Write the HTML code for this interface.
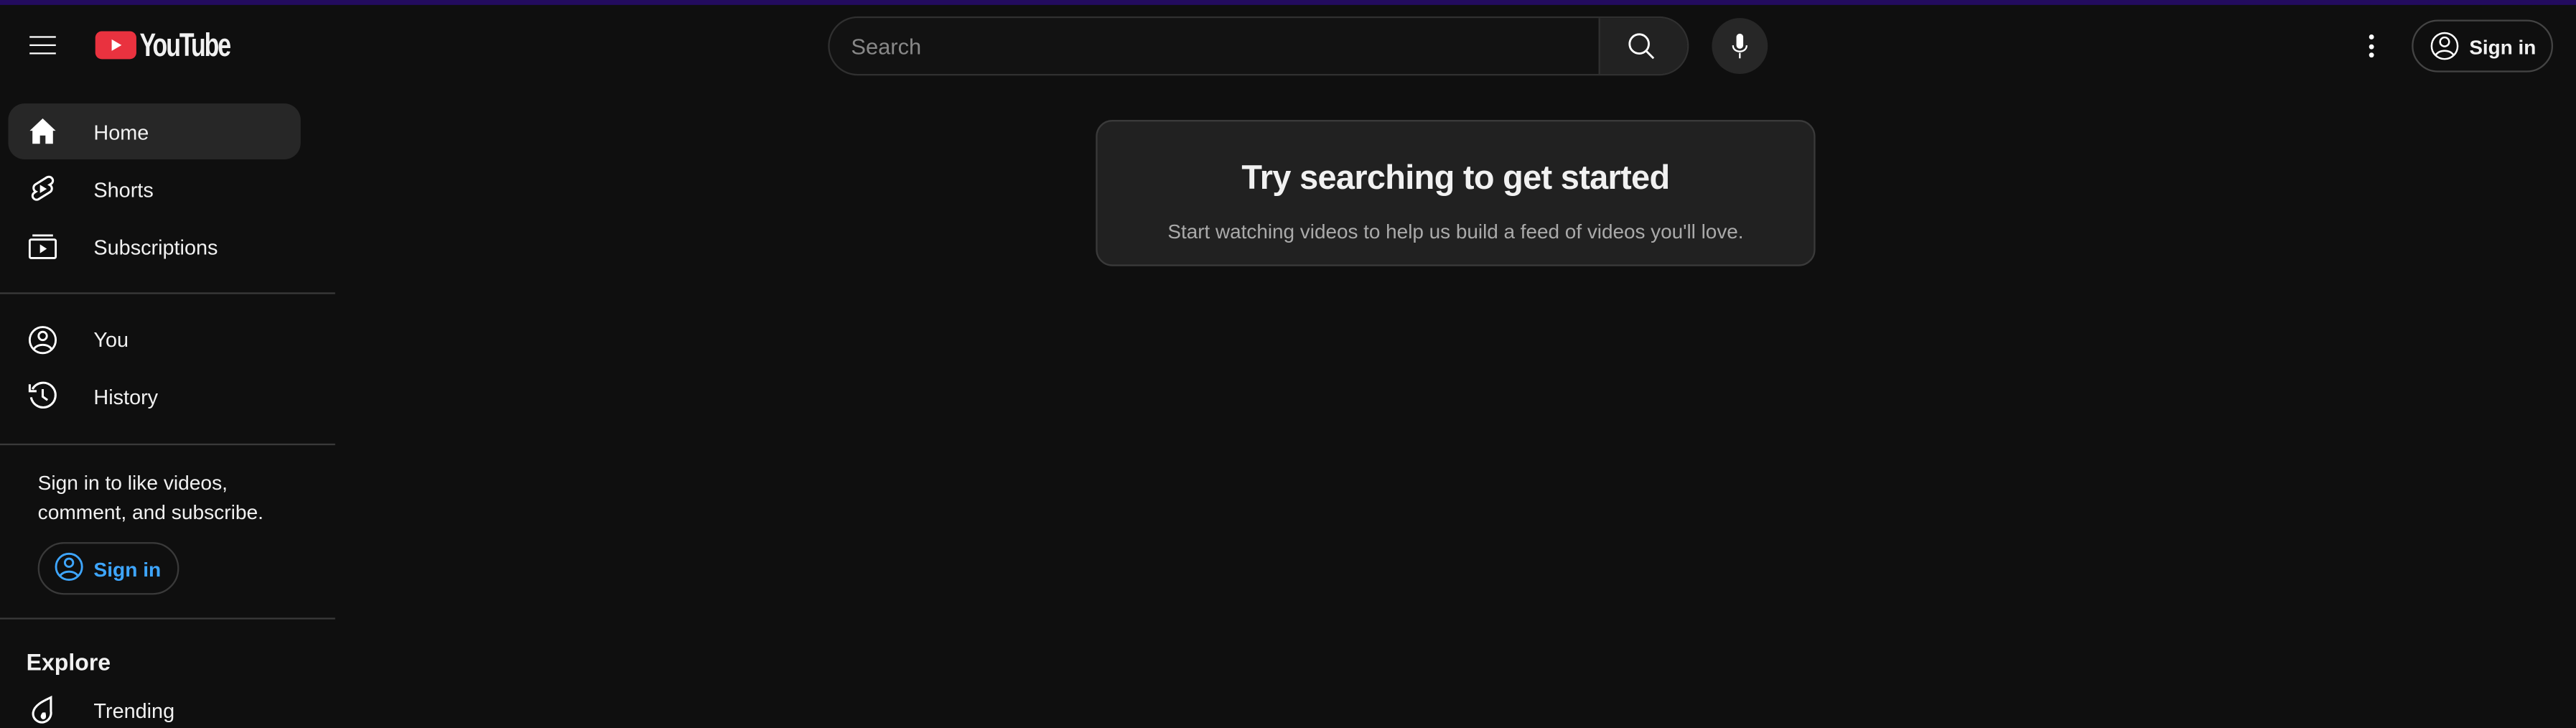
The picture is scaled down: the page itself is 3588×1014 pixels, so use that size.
<!DOCTYPE html>
<html><head><meta charset="utf-8"><style>
html,body{margin:0;padding:0;background:#0f0f0f;width:3588px;height:1014px;overflow:hidden}
#w{position:absolute;left:0;top:0;width:1568px;height:443px;transform:scale(2.2883);transform-origin:0 0;font-family:"Liberation Sans",sans-serif;color:#f1f1f1}
.a{position:absolute}
.bar{left:0;top:0;width:1568px;height:2.5px;background:#230b5e}
.item{position:absolute;left:57px;font-size:12.6px;line-height:16px}
.ic{position:absolute;left:16px}
.hr{position:absolute;left:0;width:204px;height:1px;background:#3a3a3a}
</style></head><body><div id="w">
<div class="a bar"></div>
<div class="a" style="left:18px;top:21.5px;width:16px;height:1.3px;background:#fff"></div>
<div class="a" style="left:18px;top:26.8px;width:16px;height:1.3px;background:#fff"></div>
<div class="a" style="left:18px;top:32px;width:16px;height:1.3px;background:#fff"></div>
<div class="a" style="left:58px;top:19px;width:25px;height:17px;background:#e9323f;border-radius:4px"></div>
<svg class="a" style="left:58px;top:19px" width="25" height="17"><path d="M10 5 L10 12 L16 8.5Z" fill="#fff"/></svg>
<div class="a" style="left:85px;top:17px;font-size:20px;font-weight:bold;letter-spacing:-1.2px;transform:scaleX(.74);transform-origin:0 0;line-height:22px">YouTube</div>
<div class="a" style="left:5px;top:63px;width:178px;height:34px;background:#272727;border-radius:10px"></div>
<svg class="ic" style="top:70px" width="20" height="20" viewBox="0 0 24 24"><path d="M12 2.5 L2.5 11.5 H4.5 V21 H10 V15 H14 V21 H19.5 V11.5 H21.5Z" fill="#fff"/></svg>
<div class="item" style="top:73px">Home</div>
<svg class="ic" style="top:105px" width="20" height="20" viewBox="0 0 24 24"><path d="M15 3.5 c3-1.5 6 2 3.5 4.5 l-1.5 1 c2 1 2.5 4 0 5.5 L9 19.5 c-3 1.5-6-2-3.5-4.5 l1.5-1 c-2-1-2.5-4 0-5.5Z" fill="none" stroke="#fff" stroke-width="1.6"/><path d="M10 9 V15 L15 12Z" fill="#fff"/></svg>
<div class="item" style="top:108px">Shorts</div>
<svg class="ic" style="top:140px" width="20" height="20" viewBox="0 0 24 24"><rect x="2.5" y="7" width="19" height="13.5" rx="1" fill="none" stroke="#fff" stroke-width="1.5"/><path d="M4.5 4 H19.5" stroke="#fff" stroke-width="1.5"/><path d="M10 10.5 V17 L15 13.7Z" fill="#fff"/></svg>
<div class="item" style="top:143px">Subscriptions</div>
<div class="hr" style="top:178px"></div>
<svg class="ic" style="top:197px" width="20" height="20" viewBox="0 0 24 24"><circle cx="12" cy="12" r="9.5" fill="none" stroke="#fff" stroke-width="1.5"/><circle cx="12" cy="9" r="3" fill="none" stroke="#fff" stroke-width="1.5"/><path d="M5.5 18.5 c3-4 10-4 13 0" fill="none" stroke="#fff" stroke-width="1.5"/></svg>
<div class="item" style="top:199px">You</div>
<svg class="ic" style="top:231px" width="20" height="20" viewBox="0 0 24 24"><path d="M4.5 7 A9 9 0 1 1 3.5 13" fill="none" stroke="#fff" stroke-width="1.6"/><path d="M2.5 3.5 V8.5 H7.5" fill="none" stroke="#fff" stroke-width="1.6"/><path d="M12 7 V12.5 L15.5 15" fill="none" stroke="#fff" stroke-width="1.6"/></svg>
<div class="item" style="top:234px">History</div>
<div class="hr" style="top:270px"></div>
<div class="a" style="left:23px;top:286px;font-size:12.3px;line-height:17.5px">Sign in to like videos,<br>comment, and subscribe.</div>
<div class="a" style="left:23px;top:330px;width:84px;height:30px;border:1px solid #3a3a3a;border-radius:16px"></div>
<svg class="a" style="left:32px;top:335px" width="20" height="20" viewBox="0 0 24 24"><circle cx="12" cy="12" r="9.5" fill="none" stroke="#3ea6ff" stroke-width="1.5"/><circle cx="12" cy="9" r="3" fill="none" stroke="#3ea6ff" stroke-width="1.5"/><path d="M5.5 18.5 c3-4 10-4 13 0" fill="none" stroke="#3ea6ff" stroke-width="1.5"/></svg>
<div class="a" style="left:57px;top:339px;font-size:12.3px;font-weight:bold;color:#3ea6ff;line-height:16px">Sign in</div>
<div class="hr" style="top:376px"></div>
<div class="a" style="left:16px;top:394px;font-size:14px;font-weight:bold;line-height:18px">Explore</div>
<svg class="ic" style="top:422px" width="20" height="20" viewBox="0 0 24 24"><path d="M18 3 C14 5 6 8 5 14 c-0.5 5 4 8 8 7 c4-1 5.5-5 5-8Z" fill="none" stroke="#fff" stroke-width="1.6"/><path d="M12 14 c-2 2-2 4 0 5 c2 0 3-1 2-5Z" fill="#fff"/></svg>
<div class="item" style="top:425px">Trending</div>
<div class="a" style="left:504px;top:10px;width:522px;height:34px;border:1px solid #303030;border-radius:18px;background:#121212;overflow:hidden">
<div class="a" style="left:468px;top:0;width:54px;height:34px;background:#222;border-left:1px solid #303030"></div>
</div>
<div class="a" style="left:518px;top:20px;font-size:13.5px;color:#888;line-height:17px">Search</div>
<svg class="a" style="left:989px;top:18px" width="20" height="20" viewBox="0 0 24 24"><circle cx="10.5" cy="10.5" r="7" fill="none" stroke="#fff" stroke-width="1.5"/><path d="M15.5 15.5 L21 21" stroke="#fff" stroke-width="1.5"/></svg>
<div class="a" style="left:1042px;top:11px;width:34px;height:34px;border-radius:50%;background:#272727"></div>
<svg class="a" style="left:1049px;top:18px" width="20" height="20" viewBox="0 0 24 24"><rect x="9.5" y="3" width="5" height="11" rx="2.5" fill="#fff"/><path d="M7 11.5 c0 6 10 6 10 0 M12 17 V21" fill="none" stroke="#fff" stroke-width="1.2"/></svg>
<div class="a" style="left:1441.5px;top:21px;width:3px;height:3px;border-radius:50%;background:#fff"></div>
<div class="a" style="left:1441.5px;top:26.5px;width:3px;height:3px;border-radius:50%;background:#fff"></div>
<div class="a" style="left:1441.5px;top:32px;width:3px;height:3px;border-radius:50%;background:#fff"></div>
<div class="a" style="left:1468px;top:12px;width:84px;height:30px;border:1px solid #444;border-radius:16px"></div>
<svg class="a" style="left:1478px;top:18px" width="20" height="20" viewBox="0 0 24 24"><circle cx="12" cy="12" r="9.5" fill="none" stroke="#fff" stroke-width="1.3"/><circle cx="12" cy="9" r="3.3" fill="none" stroke="#fff" stroke-width="1.3"/><path d="M5.5 18.5 c3-4 10-4 13 0" fill="none" stroke="#fff" stroke-width="1.3"/></svg>
<div class="a" style="left:1503px;top:21px;font-size:12.2px;font-weight:bold;line-height:16px">Sign in</div>
<div class="a" style="left:667px;top:73px;width:436px;height:87px;background:#212121;border:1px solid #3a3a3a;border-radius:10px;text-align:center">
<div style="margin-top:23px;font-size:20.5px;font-weight:bold;line-height:24px;letter-spacing:-0.3px">Try searching to get started</div>
<div style="margin-top:12px;font-size:12.2px;color:#aaa;line-height:16px">Start watching videos to help us build a feed of videos you'll love.</div>
</div>
</div></body></html>
